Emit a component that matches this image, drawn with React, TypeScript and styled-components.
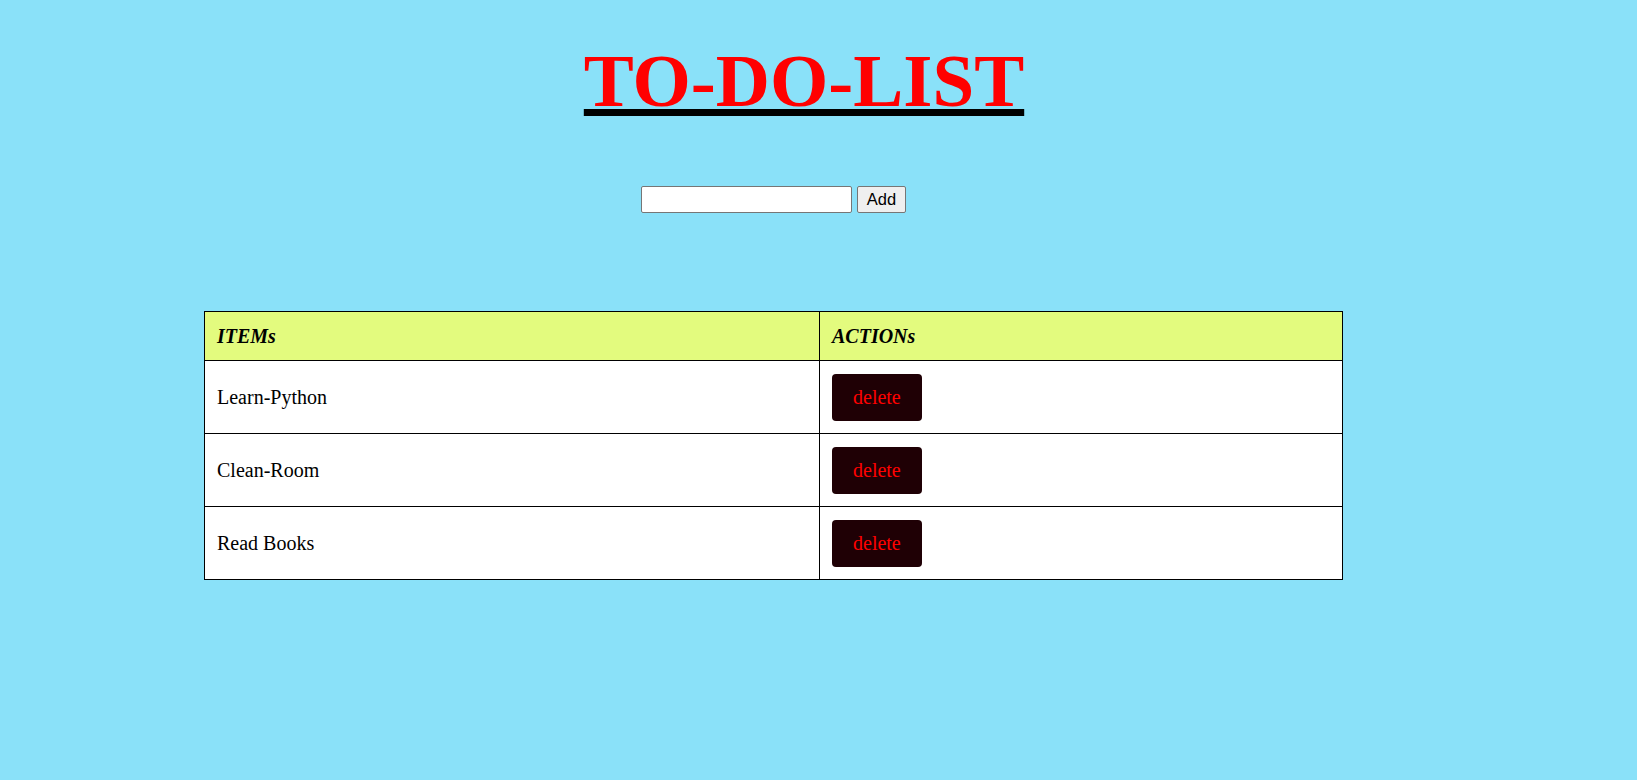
import React from "react";
import styled, { createGlobalStyle } from "styled-components";

const GlobalStyle = createGlobalStyle`
  html, body {
    margin: 0;
    padding: 0;
    background: #8ae1f9;
  }
  body {
    font-family: "Liberation Serif", "Times New Roman", serif;
    min-height: 780px;
  }
`;

const Page = styled.div`
  display: flex;
  flex-direction: column;
  padding-top: 38px;
`;

const TitleRow = styled.div`
  display: flex;
  justify-content: center;
  padding-right: 29px;
`;

const Title = styled.h1`
  margin: 0;
  font-family: "Liberation Serif", "Times New Roman", serif;
  font-size: 75px;
  line-height: 86px;
  font-weight: bold;
  color: #ff0000;
  text-decoration: underline;
  text-decoration-color: #000;
  text-decoration-thickness: 7px;
  text-underline-offset: 3px;
`;

const FormRow = styled.form`
  display: flex;
  justify-content: center;
  align-items: center;
  gap: 5px;
  margin-top: 62px;
  padding-right: 90px;
`;

const TextInput = styled.input`
  box-sizing: border-box;
  width: 211px;
  height: 27px;
  border: 1px solid #767676;
  border-radius: 2px;
  background: #fff;
  font-family: "Liberation Sans", Arial, sans-serif;
  font-size: 16px;
  padding: 1px 2px;
`;

const AddButton = styled.button`
  box-sizing: border-box;
  width: 49px;
  height: 27px;
  border: 1px solid #767676;
  border-radius: 2px;
  background: #efefef;
  color: #000;
  font-family: "Liberation Sans", Arial, sans-serif;
  font-size: 16.5px;
  padding: 0;
`;

const Table = styled.table`
  margin-top: 98px;
  margin-left: 204px;
  width: 1139px;
  border-collapse: collapse;
  table-layout: fixed;
  font-family: "Liberation Serif", "Times New Roman", serif;
  font-size: 20px;
`;

const Col = styled.col<{ $w?: number }>`
  width: ${(p) => (p.$w ? `${p.$w}px` : "auto")};
`;

const HeadCell = styled.th`
  background: #e3fb7e;
  border: 1px solid #000;
  padding: 12px;
  text-align: left;
  font-style: italic;
  font-weight: bold;
  line-height: 24px;
`;

const Cell = styled.td`
  background: #fff;
  border: 1px solid #000;
  padding: 12px;
  height: 48px;
  line-height: 24px;
  vertical-align: middle;
  color: #000;
`;

const DeleteButton = styled.button`
  display: block;
  border: none;
  border-radius: 4px;
  background: #1f0005;
  color: #ff0000;
  font-family: "Liberation Serif", "Times New Roman", serif;
  font-size: 20px;
  line-height: 23px;
  padding: 12px 21px;
  cursor: pointer;
`;

const items = ["Learn-Python", "Clean-Room", "Read Books"];

export default function App() {
  return (
    <>
      <GlobalStyle />
      <Page>
        <TitleRow>
          <Title>TO-DO-LIST</Title>
        </TitleRow>
        <FormRow onSubmit={(e) => e.preventDefault()}>
          <TextInput type="text" />
          <AddButton type="submit">Add</AddButton>
        </FormRow>
        <Table>
          <colgroup>
            <Col $w={615} />
            <Col />
          </colgroup>
          <thead>
            <tr>
              <HeadCell>ITEMs</HeadCell>
              <HeadCell>ACTIONs</HeadCell>
            </tr>
          </thead>
          <tbody>
            {items.map((item) => (
              <tr key={item}>
                <Cell>{item}</Cell>
                <Cell>
                  <DeleteButton type="button">delete</DeleteButton>
                </Cell>
              </tr>
            ))}
          </tbody>
        </Table>
      </Page>
    </>
  );
}
